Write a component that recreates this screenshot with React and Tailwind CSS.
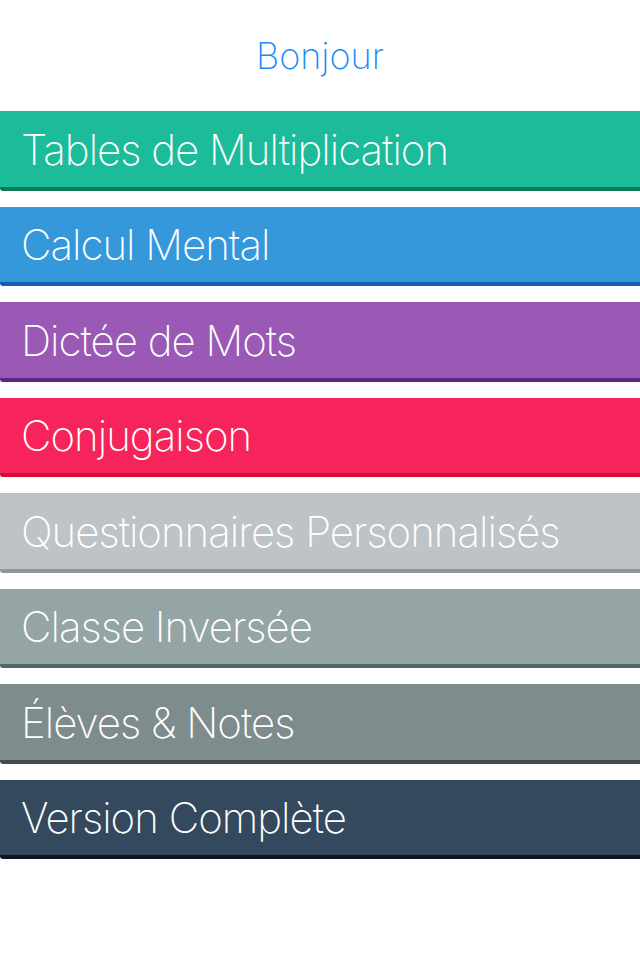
const items = [
  { label: "Tables de Multiplication", bg: "bg-[#1cbc9b]", border: "border-[#0b7a55]" },
  { label: "Calcul Mental", bg: "bg-[#3598db]", border: "border-[#155fbb]" },
  { label: "Dictée de Mots", bg: "bg-[#9959b5]", border: "border-[#5b2783]" },
  { label: "Conjugaison", bg: "bg-[#f6245a]", border: "border-[#d80c2d]" },
  { label: "Questionnaires Personnalisés", bg: "bg-[#bec3c7]", border: "border-[#8e969c]" },
  { label: "Classe Inversée", bg: "bg-[#95a5a5]", border: "border-[#566664]" },
  { label: "Élèves & Notes", bg: "bg-[#7f8c8d]", border: "border-[#434d4d]" },
  { label: "Version Complète", bg: "bg-[#34495e]", border: "border-[#0d1520]" },
];

export default function App() {
  return (
    <div className="h-[960px] w-[640px] bg-white font-['Inter',sans-serif]">
      <header className="flex h-[111px] items-start justify-center pt-[30px]">
        <h1 className="text-[36px] font-extralight leading-[52px] text-[#1a8cf7]">Bonjour</h1>
      </header>

      <nav className="flex flex-col gap-4">
        {items.map((item) => (
          <button
            key={item.label}
            type="button"
            className={`flex h-[79.5px] w-full items-center rounded-bl-[3px] border-b-4 pl-[21px] pt-[2px] text-left ${item.bg} ${item.border}`}
          >
            <span className="text-[42px] font-extralight leading-none tracking-[-1px] text-white">{item.label}</span>
          </button>
        ))}
      </nav>
    </div>
  );
}
